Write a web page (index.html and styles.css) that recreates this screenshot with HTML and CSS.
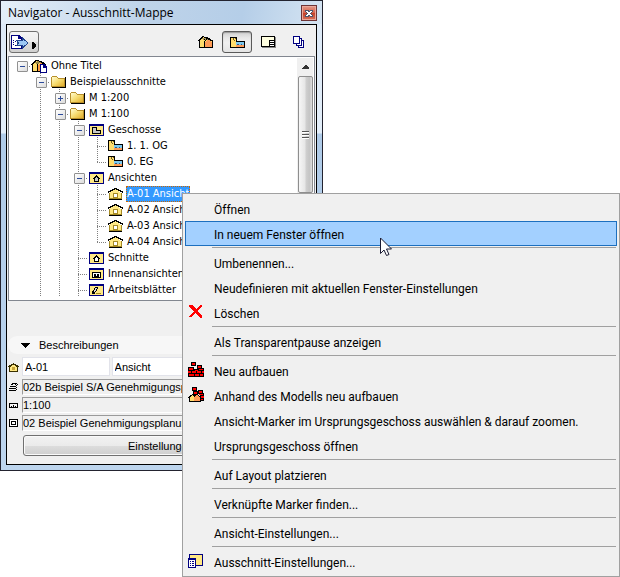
FILE: index.html
```
<!DOCTYPE html>
<html lang="de">

<head>
    <meta charset="UTF-8">
    <meta name="viewport" content="width=device-width, initial-scale=1.0">
    <title>Navigator - Ausschnitt-Mappe</title>
    <link rel="stylesheet" href="styles.css">
</head>

<body>
    <!-- icon set -->
    <svg class="defs" aria-hidden="true">
        <symbol id="i-house" viewBox="0 0 16 16">
            <path d="M2 6L5 3L10 4L14 7V13H2Z" fill="#ffdc6b"/>
            <path d="M7 8L10 5L14 8V13H7Z" fill="#ff9a55"/>
            <path d="M4 4H6V3H8V4H10V5H12V6H8V7H7V6H5V5H4Z" fill="#a8965a"/>
            <path d="M0 6H1V5H2V4H3V3H4V2H6V3H8V4H6V3H5V4H4V5H3V6H2V7H0ZM8 3H10V4H12V5H13V6H15V8H14V7H12V6H10V5H8ZM6 5H7V6H6ZM8 5H9V6H8V7H7V8H6V7H7V6H8Z" fill="#000"/>
            <path d="M1 7H2V13H14V7H15V14H1ZM6 7H7V13H6Z" fill="#000"/>
        </symbol>
        <symbol id="i-project" viewBox="0 0 18 16">
            <path d="M3 7L6 4L11 5L15 8V14H3Z" fill="#ffdc6b"/>
            <path d="M8 8L11 6L14 8V14H8Z" fill="#ff9a40"/>
            <path d="M5 5H7V4H9V5H12V6H9V7H6V6H5Z" fill="#9a8646"/>
            <path d="M1 7H2V6H3V5H4V4H5V3H9V4H12V5H14V6H15V7H16V8H14V7H12V6H11V5H9V4H6V5H5V6H4V7H3V8H1Z" fill="#000"/>
            <path d="M2 8H3V14H12V15H2ZM7 7H8V14H7Z" fill="#000"/>
            <path d="M10 7H14L17 10V16H10Z" fill="#000080"/>
            <path d="M11 8H13V11H16V15H11Z" fill="#fff"/>
        </symbol>
        <symbol id="i-folder" viewBox="0 0 18 16">
            <path d="M3 15H17V4H16V14H3Z" fill="#000"/>
            <path d="M2 4L3 3H7L9 5H15L16 6V14H2Z" fill="#b8902c"/>
            <path d="M3 4H7L9 6H15V13H3Z" fill="url(#g-folder)"/>
        </symbol>
        <linearGradient id="g-folder" x1="0" y1="0" x2="1" y2="1">
            <stop offset="0" stop-color="#fffbd0"/>
            <stop offset="0.5" stop-color="#f6dc70"/>
            <stop offset="1" stop-color="#e0ac2c"/>
        </linearGradient>
        <symbol id="i-geschosse" viewBox="0 0 18 16">
            <path d="M2 3H17V15H2Z" fill="#000080"/>
            <path d="M3 5H16V14H3Z" fill="#ffe884"/>
            <path d="M5 6H10V9H14V13H5Z" fill="#000"/>
            <path d="M6 7H9V10H13V12H6Z" fill="#c9c9c9"/>
        </symbol>
        <symbol id="i-plan" viewBox="0 0 18 16">
            <path d="M2 3H9V7H17V14H2Z" fill="#000"/>
            <path d="M3 4H8V8H11V13H3Z" fill="#ffdc6b"/>
            <path d="M8 8H16V10H8Z" fill="#7cc8ee"/>
            <path d="M8 11H16V13H8Z" fill="#ff9a55"/>
            <path d="M5 4H6V6H5ZM7 4H8V5H7ZM6 6H7V7H6Z" fill="#6b5a20"/>
            <path d="M9 10H11V11H9ZM13 10H14V11H13Z" fill="#2d5a80"/>
            <path d="M11 10H13V11H11ZM14 10H16V11H14ZM8 10H9V11H8Z" fill="#7cc8ee"/>
        </symbol>
        <symbol id="i-ansichten" viewBox="0 0 18 16">
            <path d="M2 3H17V15H2Z" fill="#000080"/>
            <path d="M3 5H16V14H3Z" fill="#ffe884"/>
            <path d="M9 6H10V7H11V8H12V9H13V10H12V13H7V10H6V9H7V8H8V7H9Z" fill="#000"/>
            <path d="M9 8H10V9H11V12H8V9H9Z" fill="#c9c9c9"/>
        </symbol>
        <symbol id="i-ansicht" viewBox="0 0 18 16">
            <path d="M3 8L9 4H10L15 8V13H3Z" fill="#ffe884"/>
            <path d="M8 3H11V4H13V5H15V6H17V8H16V7H14V6H12V5H10V4H9V5H7V6H5V7H3V8H2V6H4V5H6V4H8Z" fill="#000"/>
            <path d="M3 8H4V13H15V8H16V14H3Z" fill="#a58a24"/>
            <path d="M3 14H16V15H3Z" fill="#000"/>
            <path d="M7 8H12V13H7Z" fill="#a58a24"/>
            <path d="M8 9H11V12H8Z" fill="#fff"/>
        </symbol>
        <symbol id="i-schnitte" viewBox="0 0 18 16">
            <path d="M2 3H17V15H2Z" fill="#000080"/>
            <path d="M3 5H16V14H3Z" fill="#ffe884"/>
            <path d="M9 6H10V7H11V8H12V9H13V10H12V13H7V10H6V9H7V8H8V7H9Z" fill="#000"/>
            <path d="M9 8H10V9H11V12H8V9H9Z" fill="#fff"/>
        </symbol>
        <symbol id="i-innen" viewBox="0 0 18 16">
            <path d="M2 3H17V15H2Z" fill="#000080"/>
            <path d="M3 5H16V14H3Z" fill="#ffe884"/>
            <path d="M5 7H14V13H5Z" fill="#000"/>
            <path d="M6 8H13V12H12V9H10V11H9V9H7V12H6Z" fill="#fff"/>
        </symbol>
        <symbol id="i-blatt" viewBox="0 0 18 16">
            <path d="M2 3H17V15H2Z" fill="#000080"/>
            <path d="M3 5H16V14H3Z" fill="#ffe884"/>
            <path d="M8 6H11V8H10V10H9V11H8V13H5V10H6V9H7V7H8Z" fill="#000"/>
            <path d="M8 7H10V8H9V10H8V11H7V9H8Z" fill="#d8d8d8"/>
            <path d="M9 12H14V13H9Z" fill="#a58a24"/>
        </symbol>
        <symbol id="i-x" viewBox="0 0 16 16">
            <path d="M1 1H4L8 5L12 1H14V2L9 7L14 12V14H12L7 9L3 13H1V12L6 7L1 3Z" fill="#f00"/>
        </symbol>
        <symbol id="i-bricks" viewBox="0 0 16 16">
            <path d="M3 0H8V4H3ZM9 3H14V6H16V15H0V5H6V7H9Z" fill="#000"/>
            <path d="M4 1H7V3H4ZM10 4H13V6H10ZM1 6H5V8H1ZM7 8H10V9H7ZM11 7H15V8H11ZM0 9H3V11H0ZM4 9H8V11H4ZM9 9H13V11H9ZM14 9H16V11H14ZM1 12H6V14H1ZM7 12H11V14H7ZM12 12H15V14H12Z" fill="#f00"/>
        </symbol>
        <symbol id="i-bricks-house" viewBox="0 0 16 16">
            <path d="M4 0H9V4H4ZM10 3H15V6H16V14H12V7H5V4H10Z" fill="#000"/>
            <path d="M5 1H8V3H5ZM11 4H14V6H11ZM6 5H9V7H6ZM11 7H15V8H11ZM13 9H16V11H13ZM13 12H15V13H13Z" fill="#f00"/>
            <path d="M0 10L5 7H9L13 10V15H1V11H0Z" fill="#000"/>
            <path d="M2 10L4 8L6 10V14H2Z" fill="#ffdc6b"/>
            <path d="M6 10L9 8L12 10V14H6Z" fill="#ff9a55"/>
        </symbol>
        <symbol id="i-view-set" viewBox="0 0 16 16">
            <path d="M1 1H15V13H1Z" fill="#000080"/>
            <path d="M2 2H14V12H2Z" fill="#ffe884"/>
            <path d="M0 5H8V15H0Z" fill="#000080"/>
            <path d="M1 7H7V14H1Z" fill="#fff"/>
            <path d="M2 8H3V9H2ZM4 8H6V9H4ZM2 10H3V11H2ZM4 10H6V11H4ZM2 12H3V13H2ZM4 12H6V13H4Z" fill="#000080"/>
        </symbol>
    </svg>

    <main class="desktop">
        <section class="navigator">
            <header class="titlebar">
                <h1>Navigator - Ausschnitt-Mappe</h1>
                <button class="close" aria-label="Schließen">
                    <svg width="8" height="7" viewBox="0 0 8 7"><path d="M0 0H3L4 1L5 0H8V2L6 3V4L8 5V7H5L4 6L3 7H0V5L2 4V3L0 2Z" fill="#4b566e"/><path d="M1 1H3V2H5V1H7V2H6V3H5V4H6V5H7V6H5V5H3V6H1V5H2V4H3V3H2V2H1Z" fill="#fff"/></svg>
                </button>
            </header>

            <div class="content">
                <div class="toolbar">
                    <button class="tool raised" aria-label="Projektauswahl">
                        <svg width="28" height="20" viewBox="0 0 28 20">
                            <path d="M1 3H9L12 6V17H1Z" fill="#000080"/>
                            <path d="M2 4H8V7H11V16H2Z" fill="#fff"/>
                            <path d="M3 8H4V9H3ZM3 10H4V11H3ZM3 12H4V13H3ZM5 9H6V10H5ZM5 13H6V14H5Z" fill="#000080"/>
                            <path d="M6.500 8.500H12.500V6L18 11L12.500 16V13.500H6.500L8.500 11Z" fill="#9cc8f5" stroke="#21438c"/>
                            <path d="M22 10H23L26 13V14L23 17H22Z" fill="#000"/>
                        </svg>
                    </button>
                    <div class="modes">
                        <button class="tool" aria-label="Projekt-Mappe"><svg width="16" height="16"><use href="#i-house"/></svg></button>
                        <button class="tool pressed" aria-label="Ausschnitt-Mappe"><svg width="18" height="16"><use href="#i-plan"/></svg></button>
                        <button class="tool" aria-label="Layoutbuch">
                            <svg width="16" height="16" viewBox="0 0 16 16"><path d="M2 3H16V14H2Z" fill="#888"/><path d="M1 2H15V13H1Z" fill="#000"/><path d="M2 3H14V12H2Z" fill="#ffffe1"/><path d="M9 6H14V12H9Z" fill="#000"/><path d="M10 7H14V8H10ZM10 9H14V10H10ZM10 11H14V12H10Z" fill="#fff"/></svg>
                        </button>
                        <button class="tool" aria-label="Publisher-Sets">
                            <svg width="16" height="16" viewBox="0 0 16 16"><g fill="#fff" stroke="#000080"><path d="M7.500 6.500H12.500V13.500H7.500Z"/><path d="M5.500 4.500H10.500V11.500H5.500Z"/><path d="M2.500 2.500H8.500V9.500H2.500Z"/></g></svg>
                        </button>
                    </div>
                </div>

                <div class="tree">
                    <ul class="rows">
                        <li><i class="box root"></i><svg><use href="#i-project"/></svg><span>Ohne Titel</span></li>
                        <li><i></i><i class="box"></i><svg><use href="#i-folder"/></svg><span>Beispielausschnitte</span></li>
                        <li><i></i><i class="line"></i><i class="box plus"></i><svg><use href="#i-folder"/></svg><span>M 1:200</span></li>
                        <li><i></i><i class="line"></i><i class="box"></i><svg><use href="#i-folder"/></svg><span>M 1:100</span></li>
                        <li><i></i><i class="line"></i><i class="line"></i><i class="box"></i><svg><use href="#i-geschosse"/></svg><span>Geschosse</span></li>
                        <li><i></i><i class="line"></i><i class="line"></i><i class="line"></i><i class="tee"></i><svg><use href="#i-plan"/></svg><span>1. 1. OG</span></li>
                        <li><i></i><i class="line"></i><i class="line"></i><i class="line"></i><i class="end"></i><svg><use href="#i-plan"/></svg><span>0. EG</span></li>
                        <li><i></i><i class="line"></i><i class="line"></i><i class="box"></i><svg><use href="#i-ansichten"/></svg><span>Ansichten</span></li>
                        <li><i></i><i class="line"></i><i class="line"></i><i class="line"></i><i class="tee"></i><svg><use href="#i-ansicht"/></svg><span class="selected">A-01 Ansicht</span></li>
                        <li><i></i><i class="line"></i><i class="line"></i><i class="line"></i><i class="tee"></i><svg><use href="#i-ansicht"/></svg><span>A-02 Ansicht</span></li>
                        <li><i></i><i class="line"></i><i class="line"></i><i class="line"></i><i class="tee"></i><svg><use href="#i-ansicht"/></svg><span>A-03 Ansicht</span></li>
                        <li><i></i><i class="line"></i><i class="line"></i><i class="line"></i><i class="end"></i><svg><use href="#i-ansicht"/></svg><span>A-04 Ansicht</span></li>
                        <li><i></i><i class="line"></i><i class="line"></i><i class="tee"></i><svg><use href="#i-schnitte"/></svg><span>Schnitte</span></li>
                        <li><i></i><i class="line"></i><i class="line"></i><i class="tee"></i><svg><use href="#i-innen"/></svg><span>Innenansichten</span></li>
                        <li><i></i><i class="line"></i><i class="line"></i><i class="tee"></i><svg><use href="#i-blatt"/></svg><span>Arbeitsblätter</span></li>
                    </ul>
                    <div class="scrollbar">
                        <svg class="up" width="7" height="4" viewBox="0 0 7 4"><path d="M3 0H4L7 3V4H0V3Z" fill="#333"/></svg>
                        <div class="thumb"><div class="grip"></div></div>
                    </div>
                </div>

                <div class="details">
                    <button class="section-head">
                        <svg width="9" height="5" viewBox="0 0 9 5"><path d="M0 0H9L5 5H4Z"/></svg>
                        Beschreibungen
                    </button>
                    <div class="field names">
                        <svg width="12" height="12" viewBox="0 0 12 12"><path d="M2 6L6 3L9 6V10H2Z" fill="#ffe884"/><path d="M5 2H6V3H8V4H10V5H11V6H10V10H9V6H8V5H7V4H4V5H3V6H2V10H1V6H0V5H1V4H3V3H5ZM1 10H10V11H1Z" fill="#3a3000"/><path d="M4 6H7V9H4Z" fill="#c9a73a"/></svg>
                        <input type="text" value="A-01" aria-label="Ausschnitt-ID">
                        <input type="text" value="Ansicht" aria-label="Ausschnitt-Name">
                    </div>
                    <div class="field">
                        <svg width="12" height="12" viewBox="0 0 12 12"><path d="M4 2H9V3H8V4H3V3H4ZM3 5H8V4H9V3H10V4H9V5H8V6H2V5ZM2 7H7V8H1V7ZM8 6H9V7H8V8H7V7H8ZM2 9H6V10H1V9ZM7 9H8V8H9V9H8V10H6V9Z" fill="#000"/><path d="M5 3H7V4H5Z" fill="#f0f0f0"/></svg>
                        <input class="flat" type="text" value="02b Beispiel S/A Genehmigungsplanung" aria-label="Ebenenkombination" readonly>
                    </div>
                    <div class="field">
                        <svg width="12" height="12" viewBox="0 0 12 12"><path d="M1 4H10V9H1Z"/><path d="M2 5H9V8H8V7H7V8H6V6H5V8H4V7H3V8H2Z" fill="#f5f5f5"/></svg>
                        <input class="flat" type="text" value="1:100" aria-label="Maßstab" readonly>
                    </div>
                    <div class="field">
                        <svg width="12" height="12" viewBox="0 0 12 12"><path d="M1 2H10V10H1Z"/><path d="M2 3H9V9H2Z" fill="#fff"/><path d="M3 4H8V8H3Z"/><path d="M4 5H7V7H4Z" fill="#fff"/></svg>
                        <input class="flat" type="text" value="02 Beispiel Genehmigungsplanung" aria-label="Modelldarstellung" readonly>
                    </div>
                    <button class="settings">Einstellungen...</button>
                </div>
            </div>
        </section>

        <ul class="menu">
            <li><button>Öffnen</button></li>
            <li><button class="active">In neuem Fenster öffnen</button>
                <svg class="cursor" width="13" height="20" viewBox="0 0 13 20"><path d="M0.500 1V16.500L4 13L6.500 18.500L9 17.500L6.500 12H11.500Z" fill="#fff" stroke="#1b1b33"/></svg>
            </li>
            <li class="sep"></li>
            <li><button>Umbenennen...</button></li>
            <li><button>Neudefinieren mit aktuellen Fenster-Einstellungen</button></li>
            <li><button><svg><use href="#i-x"/></svg>Löschen</button></li>
            <li class="sep"></li>
            <li><button>Als Transparentpause anzeigen</button></li>
            <li class="sep"></li>
            <li><button><svg><use href="#i-bricks"/></svg>Neu aufbauen</button></li>
            <li><button><svg><use href="#i-bricks-house"/></svg>Anhand des Modells neu aufbauen</button></li>
            <li><button>Ansicht-Marker im Ursprungsgeschoss auswählen &amp; darauf zoomen.</button></li>
            <li><button>Ursprungsgeschoss öffnen</button></li>
            <li class="sep"></li>
            <li><button>Auf Layout platzieren</button></li>
            <li class="sep"></li>
            <li><button>Verknüpfte Marker finden...</button></li>
            <li class="sep"></li>
            <li><button>Ansicht-Einstellungen...</button></li>
            <li class="sep"></li>
            <li><button><svg><use href="#i-view-set"/></svg>Ausschnitt-Einstellungen...</button></li>
        </ul>
    </main>
</body>

</html>
```
FILE: styles.css
```
:root {
    --panel: #f0f0f0;
    --line: #a0a0a0;
    --dots: #808080;
}

* {
    box-sizing: border-box;
}

body {
    margin: 0;
    background: #fff;
    color: #000;
    font-family: "Open Sans", "Noto Sans", sans-serif;
    font-size: 12px;
}

ul {
    list-style: none;
    margin: 0;
    padding: 0;
}

button,
input {
    font: inherit;
    color: inherit;
    margin: 0;
    padding: 0;
    border: none;
    background: none;
}

svg {
    flex: none;
    shape-rendering: crispEdges;
}

.defs {
    position: absolute;
    width: 0;
    height: 0;
}

/* window and menu share one cell, the menu lies on top */
.desktop {
    display: grid;
    align-items: start;
}

.navigator,
.menu {
    grid-area: 1 / 1;
}

/* window frame */
.navigator {
    width: calc(50% + 13px);
    padding: 0 5px 5px;
    border: 1px solid #23232f;
    background: linear-gradient(#dce9f6, #e3eef9 132px, #afcbe8 133px, #bdd5ee);
}

.titlebar {
    display: flex;
    align-items: center;
    justify-content: space-between;
    height: 23px;
    margin: 0 -5px;
    padding: 1px 5px 0 7px;
    background: linear-gradient(100deg, #e4eef8, #bed3e9 45%, #b5cee8 75%, #d5e4f2);
}

.titlebar h1 {
    margin: 0;
    font-size: 12px;
    font-weight: normal;
    line-height: 22px;
}

.close {
    display: flex;
    align-items: center;
    justify-content: center;
    width: 16px;
    height: 16px;
    border: 1px solid #6d3436;
    box-shadow: inset 0 0 0 1px #eaa89b;
    background: linear-gradient(#e59a89, #d4604a 50%, #c23f28 51%, #d8735c);
}

.content {
    border: 1px solid #000;
    background: var(--panel);
    padding: 0 1px 8px;
}

/* toolbar */
.toolbar {
    display: flex;
    justify-content: space-between;
    height: 31px;
    padding: 6px 1px 0;
}

.modes {
    display: flex;
    gap: 1px;
}

.tool {
    display: flex;
    align-items: center;
    justify-content: center;
    width: 30px;
    height: 22px;
    border: 1px solid transparent;
    border-radius: 3px;
}

.tool.raised {
    border-color: #707070;
    background: linear-gradient(#f4f4f4, #ececec 50%, #dcdcdc 51%, #d0d0d0);
}

.tool.pressed {
    border-color: #5a5a5a;
    background: linear-gradient(#cfcfcf, #e8e8e8 30%, #f0f0f0 55%, #e4e4e4);
    box-shadow: inset 0 1px 1px #9a9a9a;
}

/* tree */
.tree {
    display: flex;
    justify-content: space-between;
    height: 245px;
    border: 1px solid #828790;
    background: #fff;
    font-family: "DejaVu Sans Condensed", "DejaVu Sans", sans-serif;
    font-size: 11px;
}

.rows {
    padding-left: 2px;
}

.rows li {
    display: flex;
    height: 16px;
}

.rows svg {
    width: 18px;
    height: 16px;
}

.rows span {
    line-height: 16px;
    height: 16px;
    padding: 0 1px;
    margin: 1px 0 0 2px;
    white-space: nowrap;
}

.rows .selected {
    background: #3399ff;
    color: #fff;
    outline: 1px dotted #cc6600;
    outline-offset: -1px;
}

/* each guide cell is one indent step wide */
.rows i {
    --v: repeating-linear-gradient(var(--dots) 0 1px, transparent 1px 2px);
    --h: repeating-linear-gradient(90deg, var(--dots) 0 1px, transparent 1px 2px);
    display: flex;
    align-items: center;
    width: 19px;
    height: 16px;
    background-repeat: no-repeat;
}

.rows .line {
    background-image: var(--v);
    background-size: 1px 16px;
    background-position: 10px 0;
}

.rows .tee,
.rows .box {
    background-image: var(--v), var(--h);
    background-size: 1px 16px, 9px 1px;
    background-position: 10px 0, 10px 9px;
}

.rows .end {
    background-image: var(--v), var(--h);
    background-size: 1px 9px, 9px 1px;
    background-position: 10px 0, 10px 9px;
}

.rows .root {
    background-image: var(--h);
    background-size: 9px 1px;
    background-position: 10px 9px;
}

.rows .box::before {
    content: "";
    width: 9px;
    height: 9px;
    margin: 3px 0 0 6px;
    border: 1px solid #919191;
    border-radius: 1px;
    background: linear-gradient(#2b4a9a, #2b4a9a) center / 5px 1px no-repeat, linear-gradient(135deg, #fff, #dcdcdc);
}

.rows .plus::before {
    background: linear-gradient(#2b4a9a, #2b4a9a) center / 5px 1px no-repeat, linear-gradient(#2b4a9a, #2b4a9a) center / 1px 5px no-repeat, linear-gradient(135deg, #fff, #dcdcdc);
}

.scrollbar {
    display: flex;
    flex-direction: column;
    align-items: center;
    width: 16px;
    margin: 1px 1px 1px 0;
    background: #f0f0f0;
}

.up {
    margin: 7px 0;
}

.thumb {
    display: flex;
    align-items: center;
    justify-content: center;
    width: 15px;
    height: 117px;
    border: 1px solid #8e8e8e;
    border-radius: 2px;
    background: linear-gradient(90deg, #f6f6f6, #e6e6e6 45%, #cfcfcf 55%, #c4c4c4 80%, #e0e0e0);
}

.grip {
    width: 7px;
    height: 8px;
    background: repeating-linear-gradient(#555 0 1px, #fff 1px 2px, transparent 2px 3px);
}

/* description fields */
.details {
    display: flex;
    flex-direction: column;
    padding-top: 35px;
    font-family: "Liberation Sans", Arial, sans-serif;
    font-size: 11px;
}

.section-head {
    display: flex;
    align-items: center;
    gap: 9px;
    height: 18px;
    margin-bottom: 3px;
    padding-left: 13px;
    border-radius: 9px;
    background: #f7f7f7;
}

.field {
    display: flex;
    align-items: center;
    gap: 2px;
    height: 18px;
    padding-right: 7px;
}

.field.names {
    height: 21px;
    padding-bottom: 2px;
}

.field input {
    flex: 7;
    min-width: 0;
    height: 19px;
    padding: 0 2px;
    border: 1px solid #e2e3ea;
    background: #fff;
}

.field.names input:first-of-type {
    flex: 3;
}

.field .flat {
    height: 16px;
    padding: 0;
    border-color: #9a9a9a #fff #fff #9a9a9a;
    background: var(--panel);
}

.settings {
    height: 21px;
    margin: 3px 7px 0 15px;
    border: 1px solid #707070;
    border-radius: 3px;
    background: linear-gradient(#f2f2f2, #ebebeb 50%, #dddddd 51%, #cfcfcf);
    box-shadow: inset 0 0 0 1px #fafafa;
}

/* context menu */
.menu {
    z-index: 1;
    margin: 193px 0 0 182px;
    padding: 2px;
    border: 1px solid var(--line);
    background: var(--panel);
    font-family: Roboto, "Noto Sans", sans-serif;
}

.menu li {
    position: relative;
}

.menu button {
    display: flex;
    align-items: center;
    width: 100%;
    height: 25px;
    padding: 2px 0 0 28px;
    border: 1px solid transparent;
    text-align: left;
    white-space: nowrap;
}

.menu button svg {
    width: 16px;
    height: 16px;
    margin: 0 10px 3px -26px;
}

.menu .active {
    border-color: #1c6fbf;
    background: #a3d0ff;
}

.menu .sep {
    height: 1px;
    margin: 1px 1px 2px 27px;
    background: var(--line);
}

.cursor {
    position: absolute;
    top: 16px;
    left: 195px;
    z-index: 1;
    shape-rendering: auto;
}
```
